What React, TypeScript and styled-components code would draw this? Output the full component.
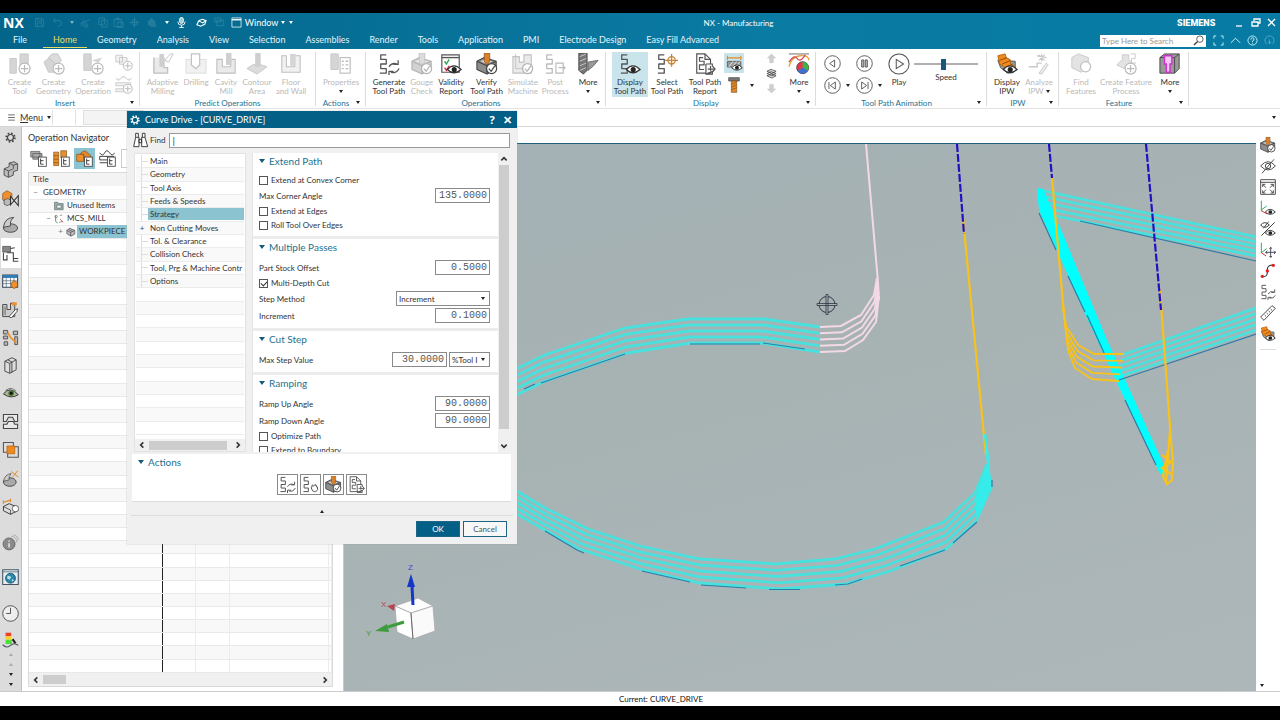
import React from "react";
import styled, { createGlobalStyle } from "styled-components";

const GlobalStyle = createGlobalStyle`
  * { box-sizing: border-box; }
  body { margin: 0; background: #000; }
  body, button, input, select { font-family: Lato, "Noto Sans", sans-serif; font-size: 8px; color: #333; }
  button { border: 0; padding: 0; background: none; }
  svg { display: block; flex: none; }
`;

/* ---------- icons ---------- */

const zig = <path d="M9 2H3v5h6v5H3v5h6v5H2" fill="none" stroke="#555" strokeWidth="1.400" strokeLinejoin="round" />;
const eye = (
  <g>
    <path d="M8 18q7-8 15 0q-8 7-15 0z" fill="#fff" stroke="#333" strokeWidth="1.400" />
    <circle cx="15.500" cy="18" r="2.800" fill="#222" />
  </g>
);
const plus = (
  <g fill="#fff" stroke="#555" strokeWidth="1.300">
    <circle cx="17" cy="17" r="6" />
    <path d="M17 13v8M13 17h8" />
  </g>
);
const check = (
  <g fill="#fff" stroke="#444" strokeWidth="1.300">
    <circle cx="17" cy="17" r="5.500" />
    <path d="M14 17l2.500 3l4-6" />
  </g>
);
const drill = <path d="M9 0h6v9l-3 4l-3-4z" fill="#d9812c" stroke="#8a5216" strokeWidth=".8" />;
const block = (
  <g stroke="#444" strokeWidth="1.200" strokeLinejoin="round">
    <path d="M1 9l8-4l13 4v8l-10 6l-11-5z" fill="#8d8d8d" />
    <path d="M1 9l11 5v9M12 14l10-5" fill="none" />
    <path d="M5 9l5-2l8 2l-6 3z" fill="#ddd" stroke="none" />
  </g>
);
const refresh = (
  <path d="M12 15q3-5 9-3M22 8v4.500h-5M23 17q-3 6-9 4M12 24v-4h5" fill="none" stroke="#555" strokeWidth="1.400" />
);
const tree = (
  <g>
    <rect x="12" y="10" width="11" height="13" fill="#fff" stroke="#444" strokeWidth="1.200" />
    <path d="M15 12v8h4M15 15h4" fill="none" stroke="#333" strokeWidth="1.300" />
  </g>
);

const icons: Record<string, React.ReactNode> = {
  createTool: <g><path d="M1 6h7v16H1zM12 1h9v14h-9z" fill="#999" stroke="#777" />{plus}</g>,
  createGeometry: <g><path d="M1 10l6-5l7 2l4 6l-5 8H6z" fill="#999" stroke="#777" /><path d="M6 5l4-4h6l4 7l-5 5z" fill="#aaa" stroke="#666" />{plus}</g>,
  createOperation: <g><path d="M2 1h8v18H2z" fill="#999" stroke="#777" /><path d="M11 8l11-3l-4 6z" fill="#999" />{plus}</g>,
  createProgram: <g><path d="M1 3h9v9H1zM6 6h10v9H6z" fill="#ddd" stroke="#666" />{plus}</g>,
  createMethod: <g><path d="M1 3q4 5 7 0t7 0t7 0M1 9h20v4H1zM1 17h20v4H1z" fill="#ddd" stroke="#666" />{plus}</g>,
  adaptive: <g><path d="M2 5v17h15v-6h-4V5" fill="#ccc" stroke="#666" strokeWidth="1.500" /><path d="M8 1h5v14H8z" fill="#888" /><path d="M14 8l6-7h3l-5 9z" fill="#fff" stroke="#666" /></g>,
  drilling: <g><path d="M1 7h22v15H1z" fill="#ddd" stroke="#aaa" /><path d="M7 1h9v12l-4 4l-5-4z" fill="#fff" stroke="#666" strokeWidth="1.300" /></g>,
  cavity: <g><path d="M2 7h6v8h9V7h5v15H2z" fill="#ccc" stroke="#666" strokeWidth="1.200" /><path d="M12 0h6v13h-6z" fill="#888" /></g>,
  contour: <g><path d="M1 17q6-5 10-5t12 3l-11 8z" fill="#aaa" stroke="#777" /><path d="M10 0h6v15h-6z" fill="#888" /></g>,
  floorWall: <g><path d="M2 3h5v12h9V3h6v18H2z" fill="#ddd" stroke="#666" strokeWidth="1.200" /><path d="M11 1h6v13h-6z" fill="#999" /></g>,
  properties: <g><path d="M1 1h8v17H1z" fill="#999" stroke="#777" /><rect x="11" y="5" width="11" height="17" fill="#fff" stroke="#555" strokeWidth="1.200" /><path d="M13 9h2M17 9h3M13 13h2M17 13h3M13 17h2M17 17h3" stroke="#555" strokeWidth="1.500" /></g>,
  generate: <g>{zig}{refresh}</g>,
  regenerate: <g>{zig}<path d="M15 12q-4 5 0 9q5 3 7-2q1-4-3-6M15 15l4-3l2 4" fill="none" stroke="#555" strokeWidth="1.400" /></g>,
  gouge: <g>{block}<path d="M9 0h6v12H9z" fill="#aaa" stroke="#666" />{check}</g>,
  validity: <g><path d="M2 2h19v19H2z" fill="#fff" stroke="#555" strokeWidth="1.300" /><path d="M2 5h19" stroke="#555" strokeWidth="1.500" /><path d="M5 9l2 3l3-5" fill="none" stroke="#2fa55a" strokeWidth="1.500" /><path d="M5 16l2 3l3-5" fill="none" stroke="#d5304a" strokeWidth="1.500" />{eye}</g>,
  verify: <g>{block}{drill}{check}</g>,
  simulate: <g><path d="M1 4h7v6h5V2h8v20H1z" fill="#ccc" stroke="#666" strokeWidth="1.200" /><path d="M4 1v16h9" fill="none" stroke="#666" />{check}</g>,
  post: <g>{zig}<path d="M13 11h8v11h-8zM16 16h7m-3-3l3 3l-3 3" fill="#fff" stroke="#555" strokeWidth="1.200" /></g>,
  moreTool: <g><path d="M2 0h9v19l-4 4l-5-4z" fill="#777" stroke="#444" /><path d="M3 4l7-3M3 9l7-3M3 14l7-3M3 19l7-3" stroke="#ccc" /><path d="M12 10l11-2l-5 6l-6 5z" fill="#999" stroke="#666" /></g>,
  displayPath: <g>{zig}{eye}</g>,
  selectPath: <g>{zig}<g fill="none" stroke="#c98238" strokeWidth="1.400"><circle cx="17" cy="8" r="4" /><path d="M17 1v14M10 8h14" /></g></g>,
  report: <g><path d="M3 1h9l6 6v15H3z" fill="#fff" stroke="#555" strokeWidth="1.300" /><path d="M10 5H6v4h5v4H6v5h5M12 1v6h6" fill="none" stroke="#555" strokeWidth="1.300" /><path d="M13 12h7v3M20 20v3h-7zM13 12v11h7M15 17.500h8M20 14l3 3.500l-3 3.500" fill="#fff" stroke="#555" strokeWidth="1.300" /></g>,
  ipwView: <g><path d="M2 4h19M2 1v6M21 1v6" stroke="#e08a2c" strokeWidth="1.600" /><path d="M2 9h19v8H2z" fill="#999" stroke="#444" /><path d="M4 17l6-8M9 17l6-8M14 17l6-8" stroke="#fff" />{eye}</g>,
  bolt: <g><path d="M4 1h16v5H4z" fill="#777" stroke="#444" /><path d="M8 6h8v17H8z" fill="#e08a2c" stroke="#8a5216" /><path d="M8 11l8-3M8 15l8-3M8 19l8-3" stroke="#8a5216" /></g>,
  arrowUp: <path d="M12 2l9 9h-5v10H8V11H3z" fill="#888" stroke="#666" />,
  arrowDown: <path d="M12 22l9-9h-5V3H8v10H3z" fill="#888" stroke="#666" />,
  layers: <g fill="#ddd" stroke="#333" strokeWidth="1.500"><path d="M2 17l9-4l11 4l-9 5zM2 12l9-4l11 4l-9 5zM2 7l9-4l11 4l-9 5z" /></g>,
  moreColor: <g><path d="M1 1h22" stroke="#999" strokeWidth="1.500" /><path d="M1 15q3-11 12-12t10 5" fill="none" stroke="#e8a23c" strokeWidth="1.500" /><path d="M1 10q6-9 9-4t9-4" fill="none" stroke="#d8465b" strokeWidth="1.300" /><circle cx="16" cy="16" r="6.500" fill="#e8374a" stroke="#444" /><path d="M16 16V9.500a6.500 6.500 0 0 1 5.600 9.800z" fill="#39b54a" /><path d="M16 16l5.600 3.300a6.500 6.500 0 0 1-11.200 0z" fill="#3b6fd0" /></g>,
  prev: <g fill="#fff" stroke="#555" strokeWidth="1.300"><circle cx="12" cy="12" r="11" /><path d="M15 7v10l-7-5z" /></g>,
  pause: <g fill="#fff" stroke="#555" strokeWidth="1.300"><circle cx="12" cy="12" r="11" /><path d="M8 7h3v10H8zM13 7h3v10h-3z" fill="#bbb" /></g>,
  first: <g fill="#fff" stroke="#555" strokeWidth="1.300"><circle cx="12" cy="12" r="11" /><path d="M16 7v10l-7-5zM7 7v10" /></g>,
  last: <g fill="#fff" stroke="#555" strokeWidth="1.300"><circle cx="12" cy="12" r="11" /><path d="M8 7v10l7-5zM17 7v10" /></g>,
  play: <g fill="#fff" stroke="#555" strokeWidth="1.100"><circle cx="12" cy="12" r="11" /><path d="M9 7v10l8-5z" /></g>,
  displayIpw: <g><path d="M2 8l3 8l8 6l8-4V9z" fill="#999" stroke="#555" /><path d="M2 3l8-2l1 4l4 2l1 5l5 3l-8 5l-4-5l-5-3z" fill="#f08a1c" stroke="#b5610c" /><path d="M4 8l8-3M7 12l9-4M10 16l8-4" stroke="#8a4a0c" />{eye}</g>,
  analyze: <g><path d="M1 15h9v-4h5M10 3l10 2M15 1v8M12 8l6-6M12 2l6 6" fill="none" stroke="#777" strokeWidth="1.400" /><path d="M12 22l8-11l2 2l-7 10z" fill="#ccc" stroke="#777" /></g>,
  findFeature: <g><path d="M2 5l7-4l11 4v10l-8 6l-10-5z" fill="#bbb" stroke="#777" /><circle cx="17" cy="15" r="5.500" fill="#fff" stroke="#666" strokeWidth="1.300" /></g>,
  createFeature: <g><path d="M2 13l6-6V2h7v5l4 5l-9 5z" fill="#bbb" stroke="#777" /><path d="M17 1h5v5h-4v5h5" fill="none" stroke="#777" />{plus}</g>,
  moreFeature: <g><path d="M1 5l5-4h16v16l-5 5H1z" fill="#999" stroke="#444" /><path d="M1 5h16v17M17 5l5-4" fill="none" stroke="#444" /><path d="M6 3h8v9h-2v9H8v-9H6z" fill="#f3c6f3" stroke="#d030d0" strokeWidth="1.500" /></g>,
  search: <g fill="none" stroke="#444" strokeWidth="1.800"><circle cx="15" cy="9" r="7" /><path d="M10 14l-8 8" strokeWidth="3" /></g>,
  expand: <path d="M2 8V2h5M17 2h5v6M22 16v6h-5M7 22H2v-6" fill="none" stroke="#dff" strokeWidth="1.800" />,
  chevronUp: <path d="M2 17l10-10l10 10" fill="none" stroke="#dff" strokeWidth="2" />,
  help: <g fill="none" stroke="#dff" strokeWidth="1.800"><circle cx="12" cy="12" r="10" /><path d="M8.500 10q0-4 3.500-4t3.500 3t-3.500 4v2M12 17v2" /></g>,
  sync: <path d="M6 20a10 10 0 1 1 12 0M12 10v9m-4-4l4 4l4-4" fill="none" stroke="#dff" strokeWidth="1.800" />,
  save: <path d="M3 3h15l3 3v15H3zM7 3v6h10V3M7 21v-8h10v8" fill="none" stroke="#dff" strokeWidth="1.600" />,
  undo: <path d="M8 3L3 8l5 5M3 8h11q7 0 7 6t-7 6" fill="none" stroke="#dff" strokeWidth="1.800" />,
  cut: <g fill="none" stroke="#dff" strokeWidth="1.600"><path d="M3 13l19-7M5 6l14 14" /><circle cx="5" cy="16" r="3" /><circle cx="13" cy="20" r="3" /></g>,
  copy: <path d="M2 2h12v15H2zM8 7h12v15H8z" fill="none" stroke="#dff" strokeWidth="1.600" />,
  paste: <path d="M2 5h16v16H2zM7 2h6v4H7zM10 11h12v12H10z" fill="none" stroke="#dff" strokeWidth="1.600" />,
  target: <g fill="none" stroke="#dff" strokeWidth="1.600"><circle cx="12" cy="12" r="6" /><path d="M12 1v22M1 12h22" /></g>,
  shape: <path d="M2 10l7-8l8 6l4 13H9l-7-4z" fill="#9cc" />,
  mic: <g fill="none" stroke="#fff" strokeWidth="2"><rect x="8" y="1" width="8" height="13" rx="4" fill="#9cc" /><path d="M4 10q0 8 8 8t8-8M12 18v5M7 23h10" /></g>,
  touch: <path d="M2 17l4-9l8-3l8 3l-3 8l-9 4zM7 9l8 4l6-5" fill="none" stroke="#fff" strokeWidth="2.400" />,
  windows: <path d="M2 2h13v9H2zM6 7h15v12H6z" fill="none" stroke="#dff" strokeWidth="1.600" />,
  window: <g fill="none" stroke="#fff" strokeWidth="1.600"><path d="M2 2h20v20H2z" /><path d="M2 6h20" strokeWidth="3" /></g>,
  menu: <path d="M3 5h18M3 12h18M3 19h18" stroke="#444" strokeWidth="2" />,
  gear: <g fill="none" stroke="currentColor"><circle cx="12" cy="12" r="6.500" strokeWidth="2.600" /><circle cx="12" cy="12" r="9.500" strokeWidth="3.500" strokeDasharray="3.700 3.760" /></g>,
  part: <path d="M3 11l7-3V3l7-2l5 3v9l-6 2v5l-7 3l-6-3zM3 11l6 3v9M9 14l7-3V6l6-2M10 3l6 3" fill="#bbb" stroke="#444" strokeWidth="1.200" />,
  assembly: <g><path d="M1 5l6-4l7 4v9l-7 4l-6-4z" fill="#f0902c" stroke="#8a5216" /><path d="M3 14l5-2l4 2v6l-5 2l-4-2z" fill="#bbb" stroke="#444" /><path d="M12 9l11 13V8L12 21z" fill="#ddd" stroke="#333" strokeWidth="1.500" /></g>,
  reuse: <g><ellipse cx="12" cy="17" rx="10" ry="6" fill="#aaa" stroke="#444" strokeWidth="1.300" /><path d="M2 16Q4 2 17 2q-6 3-5 12z" fill="#ccc" stroke="#444" strokeWidth="1.300" /></g>,
  navigator: <g><path d="M1 2h11v8H1z" fill="#888" stroke="#444" /><path d="M12 5l6-1M7 11h9v8h7M2 11v10h6M7 14v7M16 19v4h7" fill="none" stroke="#444" strokeWidth="1.500" /></g>,
  calendar: <g><path d="M1 3h21v17H1z" fill="#fff" stroke="#345" strokeWidth="1.500" /><path d="M1 3h21v4H1z" fill="#2d7fb8" /><path d="M1 11h21M1 15h21M6 7v13M12 7v13M17 7v13" stroke="#567" /><path d="M13 14l4-3l5 3v5l-5 3l-4-3z" fill="#f0902c" stroke="#8a5216" /></g>,
  machine: <g><path d="M1 5h6v7h5V3h6v19H1z" fill="#ccc" stroke="#444" strokeWidth="1.300" /><path d="M3 8v12M5 8v12" stroke="#777" /><path d="M14 2h7v4h-7z" fill="#f0902c" /><path d="M10 22l9-10l3-1l-1 4l-8 9z" fill="#fff" stroke="#333" strokeWidth="1.200" /></g>,
  process: <g><path d="M2 2h6v5H2zM2 10h6v4H2zM3 18h5v5H3zM16 3h6v5h-6zM18 11h4v11h-4z" fill="#bbb" stroke="#444" strokeWidth="1.200" /><path d="M8 5l5 8l7 6" fill="none" stroke="#f0902c" strokeWidth="2.500" /></g>,
  book: <path d="M4 6l10-5l6 3v14l-9 5l-7-3zM4 6l7 3v14M11 9l9-5M8 4l6 3v15" fill="#ddd" stroke="#444" strokeWidth="1.300" />,
  eyeGreen: <g><path d="M2 14q9-12 21 1q-10 7-21-1z" fill="#a9b59a" stroke="#333" strokeWidth="1.300" /><path d="M5 9q8-6 15 1" fill="none" stroke="#555" /><circle cx="13" cy="13" r="4" fill="#4d7a2c" /><circle cx="13" cy="13" r="2" fill="#111" /></g>,
  mold: <path d="M2 2h20v10h-4l-3-6H9l-3 6H2zM2 22v-6h5l2-4h7l2 4h4v6z" fill="#e8e8e8" stroke="#444" strokeWidth="1.500" />,
  squares: <g><path d="M2 2h14v14H2zM8 8h15v15H8z" fill="none" stroke="#555" strokeWidth="1.500" /><path d="M7 7h11v11H7z" fill="#f08a1c" stroke="#b5610c" /></g>,
  scan: <g><ellipse cx="11" cy="17" rx="9" ry="6" fill="#aaa" stroke="#444" strokeWidth="1.300" /><path d="M2 16Q4 6 13 5q-4 4-3 9z" fill="#ccc" stroke="#444" /><path d="M13 2l10 8M22 1l-7 9" stroke="#e08a2c" strokeWidth="1.400" /></g>,
  measureBox: <g><path d="M2 12l8-4l12 5v5l-10 5l-10-5z" fill="#ddd" stroke="#333" strokeWidth="1.300" /><path d="M2 12l10 5v6" fill="none" stroke="#333" /><path d="M2 3v5M12 1v5M2 6l10-3" stroke="#e08a2c" strokeWidth="1.600" /><circle cx="19" cy="15" r="4.500" fill="#fff" stroke="#333" /></g>,
  info: <g><circle cx="10" cy="14" r="8.500" fill="#8a8a8a" stroke="#555" /><path d="M10 9v2M10 13v6" stroke="#eee" strokeWidth="2" /><path d="M13 3q8 1 8 9M16 1q7 2 7 8" fill="none" stroke="#999" /></g>,
  globe: <g><path d="M1 1h22v21H1z" fill="#e4eef2" stroke="#456" strokeWidth="1.500" /><path d="M1 4h22" stroke="#456" /><circle cx="12" cy="13" r="7" fill="#2b86a8" stroke="#145" /><path d="M8 9l5 2l-2 4l-4-2zM14 14l3 2l-3 2z" fill="#bfe3ee" /></g>,
  clock: <g fill="#eee" stroke="#555" strokeWidth="1.400"><circle cx="12" cy="12" r="11" /><path d="M12 4v8H6" fill="none" /></g>,
  roles: <g><path d="M5 1h8v5H5z" fill="#e8442c" /><path d="M5 6h8v5H5z" fill="#f7d22c" /><path d="M5 11h9v6H5z" fill="#4ee03a" /><path d="M15 10l4 6" stroke="#222" strokeWidth="3" /><path d="M1 18q6 6 11 1t11 0" fill="none" stroke="#456" strokeWidth="1.500" /></g>,
  viewProgram: <g><path d="M1 2h13v8H1zM4 5h13v8H4z" fill="#aaa" stroke="#555" />{tree}</g>,
  viewTool: <g><path d="M1 3h7v19H1zM11 1h8v10h-8z" fill="#e8902c" stroke="#8a5216" /><path d="M1 8h7M1 13h7M1 18h7" stroke="#8a5216" />{tree}</g>,
  viewGeometry: <g><path d="M1 6h10v10H1z" fill="#f0902c" stroke="#8a5216" /><path d="M8 3l5-2l8 7l-4 9l-6-1V6H6z" fill="#e08a2c" stroke="#8a5216" />{tree}</g>,
  viewMethod: <g><path d="M1 4q4 6 7 0t7 0t7 0M1 9h20v5H1zM1 18h11" fill="none" stroke="#444" strokeWidth="1.400" />{tree}</g>,
  folder: <path d="M1 3h8l2 3h11v15H1zM7 10v7h10v-7z" fill="#9aa" stroke="#566" strokeWidth="1.400" />,
  mcs: <g fill="none" strokeWidth="1.800"><path d="M4 4v14l5 4" stroke="#2a7a4a" /><path d="M14 4l6-2M12 20l9-2" stroke="#777" /><path d="M15 12l7 8" stroke="#c33" /><circle cx="5" cy="6" r="3" stroke="#777" /></g>,
  workpiece: <path d="M2 8l7-5l12 5v9l-9 5l-10-6zM2 8l9 5v9M11 13l10-5M7 6l9 5" fill="#bbb" stroke="#444" strokeWidth="1.500" />,
  binoculars: <path d="M1 22l3-14h5v14zM13 22V8h5l4 14zM4 8V2h4v6M14 8V2h4v6M9 11h4v5H9z" fill="#fff" stroke="#333" strokeWidth="1.400" />,
  hide: <g fill="none" stroke="#444" strokeWidth="1.400"><path d="M1 12q11-13 22 0q-11 12-22 0z" /><circle cx="12" cy="12" r="4" /><path d="M3 23L21 2" /></g>,
  fit: <g fill="none" stroke="#444" strokeWidth="1.400"><path d="M1 1h22v22H1zM1 5h22" /><path d="M4 12V8h4M4 8l5 5M20 12V8h-4M20 8l-5 5M4 17v4h4M4 21l5-5M20 17v4h-4M20 21l-5-5" /></g>,
  csysEye: <g><path d="M2 1v16" stroke="#3a6" strokeWidth="1.500" /><path d="M2 15l8-6" stroke="#3a6" strokeWidth="1.500" /><path d="M2 16l9 5" stroke="#d33" strokeWidth="1.500" />{eye}</g>,
  hideShow: <g><path d="M1 6q6-7 13 0q-7 7-13 0zM2 22L22 2M5 11L13 1" fill="none" stroke="#444" strokeWidth="1.500" />{eye}</g>,
  csysMove: <g><path d="M2 1v15l8-6" fill="none" stroke="#3a6" strokeWidth="1.500" /><path d="M2 16l7 5" stroke="#d33" strokeWidth="1.500" /><path d="M16 8v15M8.500 15.500h15M14 10l2-2l2 2M14 21l2 2l2-2M11 13l-2.500 2.500l2.500 2.500M21 13l2.500 2.500l-2.500 2.500" fill="none" stroke="#445" strokeWidth="1.400" /></g>,
  curve: <g><path d="M3 21q9 0 8-9t8-9" fill="none" stroke="#333" strokeWidth="1.600" /><g fill="#d22"><circle cx="3.500" cy="20" r="2.500" /><circle cx="11" cy="12" r="2.500" /><circle cx="20" cy="3.500" r="2.500" /></g></g>,
  ruler: <path d="M1 18L18 1l5 4L6 23zM7 15l2 2M10 12l2 2M13 9l2 2M16 6l2 2" fill="#fff" stroke="#444" strokeWidth="1.400" />,
};

const Svg = styled.svg<{ $dim?: boolean }>`
  opacity: ${(p) => (p.$dim ? 0.4 : 1)};
`;
const Icon = ({ name, size = 16, dim }: { name: string; size?: number; dim?: boolean }) => (
  <Svg viewBox="0 0 24 24" width={size} height={size} $dim={dim} aria-hidden="true">
    {icons[name]}
  </Svg>
);

const Caret = styled.i<{ $up?: boolean; $faint?: boolean }>`
  display: block;
  width: 0;
  height: 0;
  color: ${(p) => (p.$faint ? "#aaa" : "#222")};
  border: 2px solid transparent;
  border-${(p) => (p.$up ? "bottom" : "top")}: 3px solid currentColor;
  border-${(p) => (p.$up ? "top" : "bottom")}: 0;
`;
const LightCaret = styled(Caret)`
  color: #fff;
`;

/* ---------- frame ---------- */

const Screen = styled.div`
  display: flex;
  flex-direction: column;
  min-height: 100vh;
  padding: 13px 0 14px;
  background: #000;
`;
const TitleBar = styled.header`
  display: flex;
  align-items: center;
  height: 19px;
  padding: 0 1px 0 3px;
  background: linear-gradient(90deg, #04658b, #0a7ba3 60%, #077ba4);
  color: #fff;
`;
const Brand = styled.strong`
  width: 29px;
  font: bold 14px/16px "Open Sans", sans-serif;
`;
const QuickBar = styled.div`
  display: flex;
  align-items: center;
  gap: 3px;
  width: 268px;
`;
const QuickButton = styled.button<{ $w: number }>`
  display: flex;
  align-items: center;
  justify-content: center;
  width: ${(p) => p.$w}px;
  height: 16px;
  color: #fff;
  &:disabled { opacity: 0.5; }
`;
const WindowButton = styled(QuickButton)`
  gap: 3px;
  font-size: 9px;
`;
const AppTitle = styled.h1`
  flex: 1;
  margin: 0;
  text-align: center;
  font-size: 8px;
  font-weight: 400;
`;
const Company = styled.strong`
  width: 54px;
  font: 900 9px/12px Roboto, sans-serif;
`;
const WinButton = styled.button`
  width: 16px;
  height: 16px;
  display: grid;
  place-items: center;
`;
const TabBar = styled.nav`
  display: flex;
  align-items: center;
  height: 17px;
  padding: 0 5px 0 0;
  background: linear-gradient(90deg, #04658b, #0a7ba3 60%, #077ba4);
`;
const Tab = styled.a<{ $on?: boolean }>`
  height: 15px;
  padding: 0 10px;
  font-size: 9px;
  line-height: 14px;
  white-space: nowrap;
  text-decoration: none;
  color: ${(p) => (p.$on ? "#e9dc62" : "#e3f4fa")};
  border-bottom: 1px solid ${(p) => (p.$on ? "#e9dc62" : "transparent")};
  &:first-child {
    padding: 0 16px 0 13px;
  }
`;
const SearchBox = styled.div`
  display: flex;
  align-items: center;
  width: 106px;
  height: 12px;
  margin-left: auto;
  padding-right: 2px;
  background: #fff;
`;
const SearchInput = styled.input`
  flex: 1;
  min-width: 0;
  height: 12px;
  padding: 0 2px;
  border: 0;
  outline: 0;
  background: none;
  &::placeholder { color: #999; }
`;
const TabTools = styled.div`
  display: flex;
  gap: 6px;
  padding-left: 7px;
`;

/* ---------- ribbon ---------- */

const Ribbon = styled.div`
  display: flex;
  height: 60px;
  background: #fff;
  border-bottom: 1px solid #e3e3e3;
`;
const Group = styled.section<{ $w: number }>`
  display: flex;
  flex-direction: column;
  width: ${(p) => p.$w}px;
  margin: 3px 0 2px;
  border-right: 1px solid #dcdcdc;
`;
const GroupBody = styled.div<{ $pad: number }>`
  display: flex;
  height: 45px;
  padding-left: ${(p) => p.$pad}px;
`;
const GroupFoot = styled.footer`
  display: flex;
  height: 11px;
  line-height: 12px;
  color: #1c7290;
`;
const GroupName = styled.span`
  flex: 1;
  text-align: center;
  white-space: nowrap;
`;
const Launcher = styled.span`
  width: 9px;
  padding-top: 4px;
`;
const RibbonButton = styled.button<{ $w: number; $dim?: boolean; $on?: boolean }>`
  display: flex;
  flex-direction: column;
  align-items: center;
  width: ${(p) => p.$w}px;
  height: 45px;
  padding-top: 1px;
  gap: 3px;
  line-height: 9px;
  white-space: nowrap;
  color: ${(p) => (p.$dim ? "#b9b9b9" : "#333")};
  background: ${(p) => (p.$on ? "#c9e4ea" : "none")};
`;
const ButtonText = styled.span`
  display: flex;
  flex-direction: column;
  align-items: center;
`;
const LastLine = styled.span`
  display: flex;
  align-items: center;
  gap: 2px;
`;
const SmallStack = styled.div<{ $w: number; $gap: number }>`
  display: flex;
  flex-direction: column;
  align-items: center;
  gap: ${(p) => p.$gap}px;
  width: ${(p) => p.$w}px;
  padding-top: 1px;
`;
const SmallRow = styled.div`
  display: flex;
  align-items: center;
  gap: 6px;
  width: 100%;
`;
const SmallButton = styled.button<{ $on?: boolean }>`
  display: grid;
  place-items: center;
  width: 20px;
  height: 20px;
  background: ${(p) => (p.$on ? "#c9e4ea" : "none")};
`;
const MediaGrid = styled.div`
  display: grid;
  grid-template-columns: 18px 14px 18px 14px;
  grid-auto-rows: 18px;
  row-gap: 4px;
  align-items: center;
  justify-items: center;
  width: 64px;
  padding-top: 2px;
`;
const MediaButton = styled.button`
  width: 17px;
  height: 17px;
`;
const SpeedBox = styled.label`
  display: flex;
  flex-direction: column;
  align-items: center;
  gap: 2px;
  padding-top: 6px;
  width: 70px;
`;
const Slider = styled.input`
  appearance: none;
  width: 64px;
  height: 12px;
  margin: 0;
  background: linear-gradient(#b0b0b0, #b0b0b0) center / 100% 2px no-repeat;
  &::-webkit-slider-thumb {
    appearance: none;
    width: 5px;
    height: 11px;
    background: #14597c;
  }
`;

type Btn = { icon: string; a: string; b?: string; w: number; dim?: boolean; on?: boolean; caret?: boolean; lineCaret?: boolean };

const RButton = ({ icon, a, b, w, dim, on, caret, lineCaret }: Btn) => (
  <RibbonButton $w={w} $dim={dim} $on={on} disabled={dim}>
    <Icon name={icon} size={22} dim={dim} />
    <ButtonText>
      <span>{a}</span>
      {b && <LastLine>{b}{lineCaret && <Caret />}</LastLine>}
    </ButtonText>
    {caret && <Caret />}
  </RibbonButton>
);

const RGroup = ({ name, w, pad = 4, launcher, children }: { name: string; w: number; pad?: number; launcher?: boolean; children: React.ReactNode }) => (
  <Group $w={w}>
    <GroupBody $pad={pad}>{children}</GroupBody>
    <GroupFoot>
      <GroupName>{name}</GroupName>
      {launcher && <Launcher><Caret /></Launcher>}
    </GroupFoot>
  </Group>
);

const insert: Btn[] = [
  { icon: "createTool", a: "Create", b: "Tool", w: 31, dim: true },
  { icon: "createGeometry", a: "Create", b: "Geometry", w: 37, dim: true },
  { icon: "createOperation", a: "Create", b: "Operation", w: 42, dim: true },
];
const predict: Btn[] = [
  { icon: "adaptive", a: "Adaptive", b: "Milling", w: 37, dim: true },
  { icon: "drilling", a: "Drilling", w: 30, dim: true },
  { icon: "cavity", a: "Cavity", b: "Mill", w: 30, dim: true },
  { icon: "contour", a: "Contour", b: "Area", w: 32, dim: true },
  { icon: "floorWall", a: "Floor", b: "and Wall", w: 36, dim: true },
];
const operations: Btn[] = [
  { icon: "generate", a: "Generate", b: "Tool Path", w: 38 },
  { icon: "gouge", a: "Gouge", b: "Check", w: 28, dim: true },
  { icon: "validity", a: "Validity", b: "Report", w: 31 },
  { icon: "verify", a: "Verify", b: "Tool Path", w: 40 },
  { icon: "simulate", a: "Simulate", b: "Machine", w: 33, dim: true },
  { icon: "post", a: "Post", b: "Process", w: 32, dim: true },
  { icon: "moreTool", a: "More", w: 34, caret: true },
];
const display: Btn[] = [
  { icon: "displayPath", a: "Display", b: "Tool Path", w: 36, on: true },
  { icon: "selectPath", a: "Select", b: "Tool Path", w: 38 },
  { icon: "report", a: "Tool Path", b: "Report", w: 38 },
];

/* ---------- command row ---------- */

const CommandRow = styled.div`
  display: flex;
  align-items: center;
  height: 18px;
  padding: 0 4px 0 7px;
  background: #fff;
  border-bottom: 1px solid #d6d6d6;
`;
const MenuButton = styled.button`
  display: flex;
  align-items: center;
  gap: 4px;
  width: 45px;
  font-size: 9px;
`;
const RowCell = styled.span<{ $w: number }>`
  width: ${(p) => p.$w}px;
  height: 15px;
  border-left: 1px solid #e2e2e2;
`;
const RowCombo = styled.div`
  width: 60px;
  height: 15px;
  margin-right: auto;
  background: #f4f4f4;
  border: 1px solid #e0e0e0;
`;

/* ---------- workspace ---------- */

const Workspace = styled.main`
  position: relative;
  display: flex;
  flex: 1;
  background: #fff;
`;
const ResourceBar = styled.aside`
  display: flex;
  flex-direction: column;
  align-items: center;
  width: 22px;
  background: #dcdcdc;
  border-right: 1px solid #c2c2c2;
`;
const RailSlot = styled.div<{ $top: number }>`
  padding-top: ${(p) => p.$top}px;
`;
const ResourceButton = styled.button<{ $on?: boolean }>`
  display: grid;
  place-items: center;
  width: 20px;
  height: ${(p) => (p.$on ? 30 : 20)}px;
  background: ${(p) => (p.$on ? "#fff" : "none")};
  color: #444;
`;
const ScrollMarks = styled.div`
  display: flex;
  flex-direction: column;
  align-items: center;
  gap: 7px;
  padding-top: 3px;
`;
const Navigator = styled.section`
  display: flex;
  flex-direction: column;
  width: 322px;
  padding: 5px 10px 4px 6px;
  border-right: 1px solid #c6cacb;
`;
const PanelTitle = styled.h2`
  margin: 0;
  font-size: 9px;
  font-weight: 400;
  line-height: 11px;
`;
const NavTools = styled.div`
  display: flex;
  align-items: center;
  gap: 2px;
  height: 29px;
  padding-top: 2px;
`;
const NavTool = styled.button<{ $on?: boolean }>`
  display: grid;
  place-items: center;
  width: 21px;
  height: 21px;
  background: ${(p) => (p.$on ? "#8cc3d0" : "none")};
`;
const NavFilter = styled.div`
  width: 40px;
  height: 19px;
  margin-left: 1px;
  border: 1px solid #ccc;
`;
const TableWrap = styled.div`
  display: flex;
  flex-direction: column;
  flex: 1;
  border: 1px solid #dadada;
`;
const NavTable = styled.table`
  flex: 1;
  width: 100%;
  border-collapse: collapse;
  table-layout: fixed;
  line-height: 9px;
  th {
    height: 13px;
    padding: 0 4px;
    text-align: left;
    font-weight: 400;
    background: #f3f3f3;
  }
  td {
    height: 13px;
    padding: 0;
    border-bottom: 1px solid #e9e9e9;
    border-right: 1px solid #ececec;
  }
  td:first-child { border-right: 1px solid #222; }
  tr:nth-child(even) td { background: #f8f8f8; }
`;
const TreeCell = styled.div<{ $depth: number }>`
  display: flex;
  align-items: center;
  gap: 1px;
  height: 12px;
  padding-left: ${(p) => p.$depth}px;
  white-space: nowrap;
`;
const NodeText = styled.span<{ $on?: boolean }>`
  padding: 2px;
  background: ${(p) => (p.$on ? "#8cc3d0" : "none")};
`;
const Sign = styled.span`
  width: 9px;
  color: #777;
  text-align: center;
`;
const HScroll = styled.div<{ $h: number }>`
  display: flex;
  align-items: center;
  height: ${(p) => p.$h}px;
  padding: 0 3px;
  gap: 3px;
  background: #f0f0f0;
`;
const Thumb = styled.span<{ $w: number }>`
  width: ${(p) => p.$w}px;
  height: 9px;
  margin-right: auto;
  background: #cdcdcd;
`;
const Chevron = ({ d }: { d: string }) => (
  <svg viewBox="0 0 6 6" width="8" height="8" aria-hidden="true">
    <path d={d} fill="none" stroke="#333" strokeWidth="1.200" />
  </svg>
);

const Viewport = styled.section`
  flex: 1;
  display: flex;
  min-width: 0;
  margin-top: 16px;
  border-top: 1px solid #1d5f7c;
  background: linear-gradient(165deg, #a3b1b5, #a7b2b3 40%, #adb7ba);
`;
const Scene = styled.svg`
  flex: 1;
  width: 100%;
  min-width: 0;
`;
const ViewTools = styled.aside`
  display: flex;
  flex-direction: column;
  align-items: center;
  gap: 3px;
  width: 24px;
  padding-top: 9px;
  background: #fff;
`;
const ViewTool = styled.button`
  height: 18px;
  display: grid;
  place-items: center;
`;
const Rule = styled.hr`
  width: 16px;
  margin: 3px 0;
  border: 0;
  border-top: 1px solid #ddd;
`;
const CornerMark = styled.div`
  margin-top: auto;
  padding: 0 12px 4px 0;
`;
const StatusBar = styled.footer`
  height: 15px;
  padding-left: 42px;
  text-align: center;
  line-height: 14px;
  color: #111;
  background: #fff;
  border-top: 1px solid #c8cccd;
`;

/* ---------- dialog ---------- */

const Dialog = styled.form`
  position: absolute;
  left: 127px;
  top: -16px;
  width: 390px;
  background: #f0f0f0;
  box-shadow: 0 0 1px #999;
`;
const DialogTitle = styled.header`
  display: flex;
  align-items: center;
  gap: 5px;
  height: 17px;
  padding: 0 5px 0 3px;
  color: #fff;
  background: #045f86;
`;
const DialogName = styled.h2`
  flex: 1;
  margin: 0;
  font-size: 9px;
  font-weight: 400;
`;
const DialogIcon = styled.button`
  width: 10px;
  font: bold 11px/14px "Open Sans", sans-serif;
  color: #fff;
`;
const FindRow = styled.label`
  display: flex;
  align-items: center;
  gap: 1px;
  padding: 4px 7px 5px 6px;
`;
const FindInput = styled.input`
  flex: 1;
  height: 15px;
  margin-left: 3px;
  padding: 0 2px;
  border: 1px solid #999;
  outline: 0;
  background: #fff;
  font-size: 10px;
`;
const Columns = styled.div`
  display: grid;
  grid-template-columns: 112px 258px;
  column-gap: 6px;
  height: 299px;
  padding-left: 7px;
`;
const PageList = styled.div`
  display: flex;
  flex-direction: column;
  background: #fff;
  border: 1px solid #e2e2e2;
  overflow: hidden;
`;
const Pages = styled.ul`
  display: flex;
  flex-direction: column;
  height: 280px;
  margin: 1px 0 0;
  padding: 0 1px;
  list-style: none;
`;
const Page = styled.li`
  display: flex;
  align-items: center;
  flex: 1;
  border-bottom: 1px solid #ececec;
  &:nth-child(even) { background: #f9f9f9; }
`;
const Twig = styled.span`
  display: flex;
  align-items: center;
  justify-content: center;
  align-self: stretch;
  width: 12px;
  color: #444;
`;
const TwigLine = styled.span`
  align-self: stretch;
  flex: none;
  width: 1px;
  margin-left: 5px;
  background: #ddd;
`;
const TwigArm = styled.span`
  width: 6px;
  height: 1px;
  background: #ddd;
`;
const PageLink = styled.a<{ $on?: boolean }>`
  flex: 1;
  padding: 0 2px;
  line-height: 12px;
  white-space: nowrap;
  overflow: hidden;
  color: #333;
  text-decoration: none;
  background: ${(p) => (p.$on ? "#8cc3d0" : "none")};
`;
const Fill = styled.div`
  flex: 1;
`;
const Options = styled.div`
  display: flex;
  overflow: hidden;
  border-left: 1px solid #e4e4e4;
`;
const Sections = styled.div`
  width: 245px;
  background: #fff;
`;
const Section = styled.fieldset`
  min-width: 0;
  margin: 0;
  padding: 0 8px 4px 6px;
  border: 0;
  border-bottom: 3px solid #ececec;
`;
const SectionHead = styled.button`
  display: flex;
  align-items: center;
  gap: 4px;
  height: 16px;
  margin-bottom: 4px;
  font-size: 10px;
  color: #1c7290;
`;
const Triangle = styled.i`
  width: 0;
  border: 3px solid transparent;
  border-top: 4px solid #135c78;
  border-bottom: 0;
`;
const FieldRow = styled.label`
  display: flex;
  align-items: center;
  gap: 2px;
  height: 17px;
`;
const FieldName = styled.span`
  flex: 1;
`;
const NumberInput = styled.input`
  width: 55px;
  height: 15px;
  padding: 0 2px;
  border: 1px solid #8a8a8a;
  text-align: right;
  font: 10px "Liberation Mono", monospace;
  color: #555;
`;
const SelectBox = styled.span<{ $w: number }>`
  display: flex;
  align-items: center;
  width: ${(p) => p.$w}px;
  height: 15px;
  padding-right: 4px;
  border: 1px solid #8a8a8a;
`;
const Select = styled.select`
  flex: 1;
  min-width: 0;
  height: 13px;
  padding: 0 2px;
  appearance: none;
  border: 0;
  outline: 0;
  background: none;
`;
const CheckRow = styled.label`
  display: flex;
  align-items: center;
  gap: 3px;
  height: 14px;
`;
const CheckInput = styled.input`
  appearance: none;
  width: 9px;
  height: 9px;
  margin: 0;
  border: 1px solid #555;
  background: #fff;
  &:checked::before {
    content: "";
    display: block;
    width: 5px;
    height: 3px;
    margin: 1px;
    border: solid #333;
    border-width: 0 0 1px 1px;
    transform: rotate(-45deg);
  }
`;
const VScroll = styled.div`
  display: flex;
  flex-direction: column;
  align-items: center;
  width: 12px;
  padding: 2px 0;
  gap: 2px;
`;
const VThumb = styled.span`
  width: 10px;
  height: 264px;
  margin-bottom: auto;
  background: #cdcdcd;
`;
const Actions = styled.section`
  margin: 2px 6px 0 5px;
  height: 48px;
  padding: 0 6px;
  background: #fff;
  border-bottom: 1px solid #ddd;
`;
const ActionRow = styled.div`
  display: flex;
  justify-content: center;
  gap: 2px;
`;
const ActionButton = styled.button`
  display: grid;
  place-items: center;
  width: 21px;
  height: 21px;
  border: 1px solid #8a8a8a;
  background: #fff;
`;
const Collapse = styled.div`
  display: flex;
  justify-content: center;
  height: 14px;
  padding-top: 8px;
  margin: 0 4px;
  border-bottom: 1px solid #ddd;
`;
const DialogFoot = styled.footer`
  display: flex;
  justify-content: flex-end;
  gap: 3px;
  padding: 5px 10px 7px;
`;
const FootButton = styled.button<{ $primary?: boolean }>`
  width: 44px;
  height: 16px;
  border: 1px solid #1c6585;
  color: ${(p) => (p.$primary ? "#fff" : "#3c5968")};
  background: ${(p) => (p.$primary ? "#045f86" : "#f7f7f7")};
`;

const Check = ({ text, on }: { text: string; on?: boolean }) => (
  <CheckRow>
    <CheckInput type="checkbox" defaultChecked={on} />
    {text}
  </CheckRow>
);
const NumberField = ({ text, value }: { text: string; value: string }) => (
  <FieldRow>
    <FieldName>{text}</FieldName>
    <NumberInput defaultValue={value} />
  </FieldRow>
);
const Head = ({ text }: { text: string }) => (
  <SectionHead type="button">
    <Triangle />
    {text}
  </SectionHead>
);

/* ---------- tool path geometry ---------- */

type Pt = [number, number];
const blend = (a: Pt[], b: Pt[], n: number) =>
  Array.from({ length: n }, (_, i) =>
    a.map(([x, y], k) => {
      const t = i / (n - 1);
      return `${(x + (b[k][0] - x) * t).toFixed(1)},${(y + (b[k][1] - y) * t).toFixed(1)}`;
    }).join(" ")
  );

const upperArc = blend(
  [[510, 372], [545, 355], [625, 328], [688, 319], [764, 319], [820, 327]],
  [[510, 398], [543, 382], [627, 353], [690, 343], [762, 343], [820, 352]], 5);
const lowerArc = blend(
  [[510, 487], [545, 508], [588, 529], [640, 546], [700, 559], [775, 564], [835, 559], [875, 549], [944, 522], [975, 493], [987, 464]],
  [[510, 510], [545, 530], [580, 549], [640, 569], [700, 583], [780, 589], [845, 584], [890, 571], [946, 549], [976, 521], [992, 486]], 5);
const pinkLead = blend(
  [[820, 327], [841, 326], [861, 315], [874, 295], [877, 278]],
  [[820, 352], [845, 351], [863, 340], [876, 322], [879, 296]], 5);
const yellowLead = blend(
  [[1063, 305], [1066, 326], [1078, 345], [1094, 354], [1124, 354]],
  [[1064, 315], [1068, 350], [1075, 368], [1092, 379], [1119, 381]], 5);
const rightTop = blend([[1040, 190], [1256, 237]], [[1056, 216], [1256, 256]], 5);
const rightLow = blend([[1122, 355], [1256, 308]], [[1118, 377], [1256, 330]], 5);
const lines = (set: string[]) => set.map((p) => <polyline key={p} points={p} />);

const ToolPaths = () => (
  <Scene viewBox="344 144 912 547" preserveAspectRatio="xMinYMin slice" role="img" aria-label="Tool path view">
    <g fill="none" stroke="#48e2de" strokeWidth="2.800">
      {lines(upperArc)}
      {lines(lowerArc)}
      {lines(rightTop)}
      {lines(rightLow)}
    </g>
    <path d="M984 432L992 485L977 520L975 498L987 464z" fill="#36ecea" />
    <path d="M1037 188L1043 189L1062 232L1107 340L1168 474L1160 474L1118 385L1085 314L1039 210z" fill="#0ff" />
    <g fill="none" stroke="#2f7ba8" strokeWidth="1.200">
      <path d="M524 389l11-5M541 383L625 354M690 344H760M763 343L805 349" />
      <path d="M545 531L577 550L584 553M642 571L690 582M701 585L746 588M769 589.500H800M835 585L848 584L862 579M900 566L945 550M953 543L977 522M992 480v7" />
      <path d="M1080 221L1256 261M1119 380L1256 334M1039 213L1056 250M1068 276L1085 312M1087 315L1105 355M1125 400L1156 465" />
    </g>
    <g fill="none" stroke="#f3d9e6" strokeWidth="2">
      <path d="M866 144L878 282L879 300" />
      {lines(pinkLead)}
    </g>
    <g fill="none" stroke="#f8c21c" strokeWidth="2.200">
      <path d="M963 218L984 436L986 455" />
      <path d="M1052 178L1064 315" />
      <path d="M1160 290L1171 440L1173 462L1172 480L1167 484L1163 476L1168 450M1162 455l9 7l-9 6l9 6M1170 430l-4 52" />
      <g strokeWidth="1.800">{lines(yellowLead)}</g>
    </g>
    <path d="M985 434L989 466" stroke="#36ecea" strokeWidth="2.500" />
    <g fill="none" stroke="#2510c0" strokeWidth="2.200" strokeDasharray="8 2">
      <path d="M957 144L964 234" />
      <path d="M1049 144L1052 178" />
      <path d="M1146 144L1161 310" />
    </g>
    <g fill="none" stroke="#334" strokeWidth="1">
      <circle cx="827" cy="304.500" r="8" />
      <path d="M817 303.500h20v2h-20zM826 294.500h2v20h-2z" fill="#a9b3b5" strokeWidth=".8" />
    </g>
    <g stroke="#aaa" strokeWidth=".8" strokeLinejoin="round">
      <path d="M395 606L418 598L433 606L411 613z" fill="#fdfdfd" />
      <path d="M395 606L411 613L413 639L397 632z" fill="#fff" />
      <path d="M411 613L433 606L435 631L413 639z" fill="#fafafa" />
      <path d="M411 613L413 639" stroke="#555" />
    </g>
    <path d="M413 605L412 586" stroke="#1437c8" strokeWidth="3" />
    <path d="M411 574L407 587H415z" fill="#1437c8" />
    <path d="M404 622L388 627" stroke="#3e9c3e" strokeWidth="3" />
    <path d="M375 631L387 624L389 632z" fill="#3e9c3e" />
    <path d="M387 606L395 604L394 611z" fill="#b84450" />
    <g fontFamily="Liberation Sans, sans-serif" fontSize="8">
      <text x="408" y="570" fill="#4646d8">Z</text>
      <text x="381" y="607" fill="#b84450">X</text>
      <text x="366" y="636" fill="#3e9c3e">Y</text>
    </g>
  </Scene>
);

/* ---------- data ---------- */

const tabs = ["File", "Home", "Geometry", "Analysis", "View", "Selection", "Assemblies", "Render", "Tools", "Application", "PMI", "Electrode Design", "Easy Fill Advanced"];
const quick: [string, number, boolean?][] = [
  ["save", 14, true], ["undo", 17, true], ["", 5, true], ["cut", 17, true], ["copy", 12, true], ["paste", 13, true],
  ["target", 13, true], ["shape", 17, true], ["", 5], ["mic", 19], ["touch", 14], ["windows", 17, true],
];
const windowControls = [
  ["Minimize", "M2 9h6"],
  ["Restore", "M4 4V2h6v4H8M2 5h6v4H2z"],
  ["Close", "M2 2l7 7M9 2l-7 7"],
];
/* resource bar entries with the space above each */
const rail: [string, number][] = [
  ["gear", 0], ["part", 12], ["assembly", 9], ["reuse", 6], ["navigator", 4], ["calendar", 3], ["machine", 8],
  ["process", 8], ["book", 8], ["eyeGreen", 7], ["mold", 9], ["squares", 8], ["scan", 9], ["measureBox", 8],
  ["info", 16], ["globe", 15], ["clock", 16], ["roles", 7],
];
const pages = ["Main", "Geometry", "Tool Axis", "Feeds & Speeds", "Strategy", "Non Cutting Moves", "Tol. & Clearance", "Collision Check", "Tool, Prg & Machine Contr", "Options"];
const viewTools = ["verify", "hide", "fit", "csysEye", "hideShow", "csysMove", "curve", "generate", "ruler", "displayIpw"];

export default function App() {
  return (
    <Screen>
      <GlobalStyle />
      <TitleBar>
        <Brand>NX</Brand>
        <QuickBar>
          {quick.map(([name, w, dim], i) => (
            <QuickButton key={i} $w={w} disabled={dim} aria-label={name || "More"}>
              {name ? <Icon name={name} size={11} dim={dim} /> : <LightCaret />}
            </QuickButton>
          ))}
          <WindowButton $w={54}>
            <Icon name="window" size={11} />
            Window
            <LightCaret />
          </WindowButton>
          <QuickButton $w={5} aria-label="Customize"><LightCaret /></QuickButton>
        </QuickBar>
        <AppTitle>NX - Manufacturing</AppTitle>
        <Company>SIEMENS</Company>
        {windowControls.map(([label, d]) => (
          <WinButton key={label} aria-label={label}>
            <svg viewBox="0 0 11 11" width="11" height="11"><path d={d} fill="none" stroke="#fff" strokeWidth="1.300" /></svg>
          </WinButton>
        ))}
      </TitleBar>
      <TabBar>
        {tabs.map((t) => <Tab key={t} href="#" $on={t === "Home"}>{t}</Tab>)}
        <SearchBox>
          <SearchInput placeholder="Type Here to Search" aria-label="Search" />
          <Icon name="search" size={11} />
        </SearchBox>
        <TabTools>
          <Icon name="expand" size={11} />
          <Icon name="chevronUp" size={11} />
          <Icon name="help" size={11} />
          <Icon name="sync" size={11} dim />
        </TabTools>
      </TabBar>

      <Ribbon>
        <RGroup name="Insert" w={140} launcher>
          {insert.map((b) => <RButton key={b.b} {...b} />)}
          <SmallStack $w={20} $gap={5}>
            <Icon name="createProgram" size={18} dim />
            <Icon name="createMethod" size={18} dim />
          </SmallStack>
        </RGroup>
        <RGroup name="Predict Operations" w={176}>{predict.map((b) => <RButton key={b.a} {...b} />)}</RGroup>
        <RGroup name="Actions" w={50} launcher><RButton icon="properties" a="Properties" w={42} dim caret /></RGroup>
        <RGroup name="Operations" w={240} launcher>{operations.map((b) => <RButton key={b.a} {...b} />)}</RGroup>
        <RGroup name="Display" w={210} pad={6} launcher>
          {display.map((b) => <RButton key={b.a} {...b} />)}
          <SmallStack $w={34} $gap={2}>
            <SmallRow><SmallButton $on aria-label="Show in-process workpiece"><Icon name="ipwView" size={17} /></SmallButton></SmallRow>
            <SmallRow><SmallButton aria-label="Tool display"><Icon name="bolt" size={16} /></SmallButton><Caret /></SmallRow>
          </SmallStack>
          <SmallStack $w={27} $gap={4}>
            <Icon name="arrowUp" size={11} dim />
            <Icon name="layers" size={11} />
            <Icon name="arrowDown" size={11} dim />
          </SmallStack>
          <RButton icon="moreColor" a="More" w={28} caret />
        </RGroup>
        <RGroup name="Tool Path Animation" w={171} pad={7} launcher>
          <MediaGrid>
            <MediaButton aria-label="Step back"><Icon name="prev" size={17} /></MediaButton>
            <span />
            <MediaButton aria-label="Pause"><Icon name="pause" size={17} /></MediaButton>
            <span />
            <MediaButton aria-label="First"><Icon name="first" size={17} /></MediaButton>
            <Caret />
            <MediaButton aria-label="Last"><Icon name="last" size={17} /></MediaButton>
            <Caret />
          </MediaGrid>
          <RButton icon="play" a="Play" w={24} />
          <SpeedBox>
            <Slider type="range" defaultValue={45} />
            Speed
          </SpeedBox>
        </RGroup>
        <RGroup name="IPW" w={72} launcher>
          <RButton icon="displayIpw" a="Display" b="IPW" w={32} />
          <RButton icon="analyze" a="Analyze" b="IPW" w={32} dim lineCaret />
        </RGroup>
        <RGroup name="Feature" w={130} launcher>
          <RButton icon="findFeature" a="Find" b="Features" w={36} dim />
          <RButton icon="createFeature" a="Create Feature" b="Process" w={54} dim />
          <RButton icon="moreFeature" a="More" w={34} caret />
        </RGroup>
      </Ribbon>

      <CommandRow>
        <MenuButton>
          <Icon name="menu" size={9} />
          <span><u>M</u>enu</span>
          <Caret />
        </MenuButton>
        <RowCell $w={23} />
        <RowCell $w={8} />
        <RowCombo />
        <Caret />
      </CommandRow>

      <Workspace>
        <ResourceBar>
          {rail.map(([name, top]) => (
            <RailSlot key={name} $top={top}>
              <ResourceButton $on={name === "navigator"} aria-label={name}>
                <Icon name={name} size={name === "gear" ? 11 : 17} />
              </ResourceButton>
            </RailSlot>
          ))}
          <ScrollMarks><Caret $up $faint /><Caret $up $faint /><Caret /><Caret /></ScrollMarks>
        </ResourceBar>

        <Navigator>
          <PanelTitle>Operation Navigator</PanelTitle>
          <NavTools>
            <NavTool aria-label="Program order view"><Icon name="viewProgram" size={17} /></NavTool>
            <NavTool aria-label="Machine tool view"><Icon name="viewTool" size={17} /></NavTool>
            <NavTool $on aria-label="Geometry view"><Icon name="viewGeometry" size={17} /></NavTool>
            <NavTool aria-label="Method view"><Icon name="viewMethod" size={17} /></NavTool>
            <NavFilter />
          </NavTools>
          <TableWrap>
            <NavTable>
              <colgroup><col width="133" /><col width="33" /><col width="34" /><col width="99" /><col /></colgroup>
              <thead><tr><th>Title</th><th /><th /><th /><th /></tr></thead>
              <tbody>
                <tr><td><TreeCell $depth={2}><Sign>−</Sign><NodeText>GEOMETRY</NodeText></TreeCell></td><td /><td /><td /><td /></tr>
                <tr><td><TreeCell $depth={25}><Icon name="folder" size={10} /><NodeText>Unused Items</NodeText></TreeCell></td><td /><td /><td /><td /></tr>
                <tr><td><TreeCell $depth={15}><Sign>−</Sign><Icon name="mcs" size={10} /><NodeText>MCS_MILL</NodeText></TreeCell></td><td /><td /><td /><td /></tr>
                <tr><td><TreeCell $depth={27}><Sign>+</Sign><Icon name="workpiece" size={10} /><NodeText $on>WORKPIECE</NodeText></TreeCell></td><td /><td /><td /><td /></tr>
                {Array.from({ length: 33 }, (_, i) => <tr key={i}><td /><td /><td /><td /><td /></tr>)}
              </tbody>
            </NavTable>
            <HScroll $h={13}>
              <Chevron d="M4 1L2 3l2 2" />
              <Thumb $w={23} />
              <Chevron d="M2 1l2 2l-2 2" />
            </HScroll>
          </TableWrap>
        </Navigator>

        <Viewport><ToolPaths /></Viewport>

        <ViewTools>
          {viewTools.map((name) => <ViewTool key={name} aria-label={name}><Icon name={name} size={16} /></ViewTool>)}
          <Rule />
          <CornerMark><Caret /></CornerMark>
        </ViewTools>

        <Dialog onSubmit={(e) => e.preventDefault()}>
          <DialogTitle>
            <Icon name="gear" size={10} />
            <DialogName>Curve Drive - [CURVE_DRIVE]</DialogName>
            <DialogIcon type="button">?</DialogIcon>
            <DialogIcon type="button">✕</DialogIcon>
          </DialogTitle>
          <FindRow>
            <Icon name="binoculars" size={16} />
            Find
            <FindInput defaultValue="|" />
          </FindRow>
          <Columns>
            <PageList>
              <Pages>
                {Array.from({ length: 21 }, (_, i) => (
                  <Page key={i}>
                    {pages[i] && (
                      <>
                        <Twig>{i === 5 ? "+" : <><TwigLine /><TwigArm /></>}</Twig>
                        <PageLink href="#" $on={i === 4}>{pages[i]}</PageLink>
                      </>
                    )}
                  </Page>
                ))}
              </Pages>
              <Fill />
              <HScroll $h={12}>
                <Chevron d="M4 1L2 3l2 2" />
                <Thumb $w={78} />
                <Chevron d="M2 1l2 2l-2 2" />
              </HScroll>
            </PageList>
            <Options>
              <Sections>
                <Section>
                  <Head text="Extend Path" />
                  <Check text="Extend at Convex Corner" />
                  <NumberField text="Max Corner Angle" value="135.0000" />
                  <Check text="Extend at Edges" />
                  <Check text="Roll Tool Over Edges" />
                </Section>
                <Section>
                  <Head text="Multiple Passes" />
                  <NumberField text="Part Stock Offset" value="0.5000" />
                  <Check text="Multi-Depth Cut" on />
                  <FieldRow>
                    <FieldName>Step Method</FieldName>
                    <SelectBox $w={94}><Select><option>Increment</option></Select><Caret /></SelectBox>
                  </FieldRow>
                  <NumberField text="Increment" value="0.1000" />
                </Section>
                <Section>
                  <Head text="Cut Step" />
                  <FieldRow as="div">
                    <FieldName as="label" htmlFor="max-step">Max Step Value</FieldName>
                    <NumberInput id="max-step" defaultValue="30.0000" />
                    <SelectBox $w={41}><Select aria-label="Step unit"><option>%Tool I</option></Select><Caret /></SelectBox>
                  </FieldRow>
                </Section>
                <Section>
                  <Head text="Ramping" />
                  <NumberField text="Ramp Up Angle" value="90.0000" />
                  <NumberField text="Ramp Down Angle" value="90.0000" />
                  <Check text="Optimize Path" />
                  <Check text="Extend to Boundary" />
                </Section>
              </Sections>
              <VScroll>
                <Chevron d="M1 4l2-2l2 2" />
                <VThumb />
                <Chevron d="M1 2l2 2l2-2" />
              </VScroll>
            </Options>
          </Columns>
          <Actions>
            <Head text="Actions" />
            <ActionRow>
              {["generate", "regenerate", "verify", "report"].map((name) => (
                <ActionButton key={name} type="button" aria-label={name}><Icon name={name} size={17} /></ActionButton>
              ))}
            </ActionRow>
          </Actions>
          <Collapse><Caret $up /></Collapse>
          <DialogFoot>
            <FootButton $primary>OK</FootButton>
            <FootButton type="button">Cancel</FootButton>
          </DialogFoot>
        </Dialog>
      </Workspace>
      <StatusBar>Current: CURVE_DRIVE</StatusBar>
    </Screen>
  );
}
